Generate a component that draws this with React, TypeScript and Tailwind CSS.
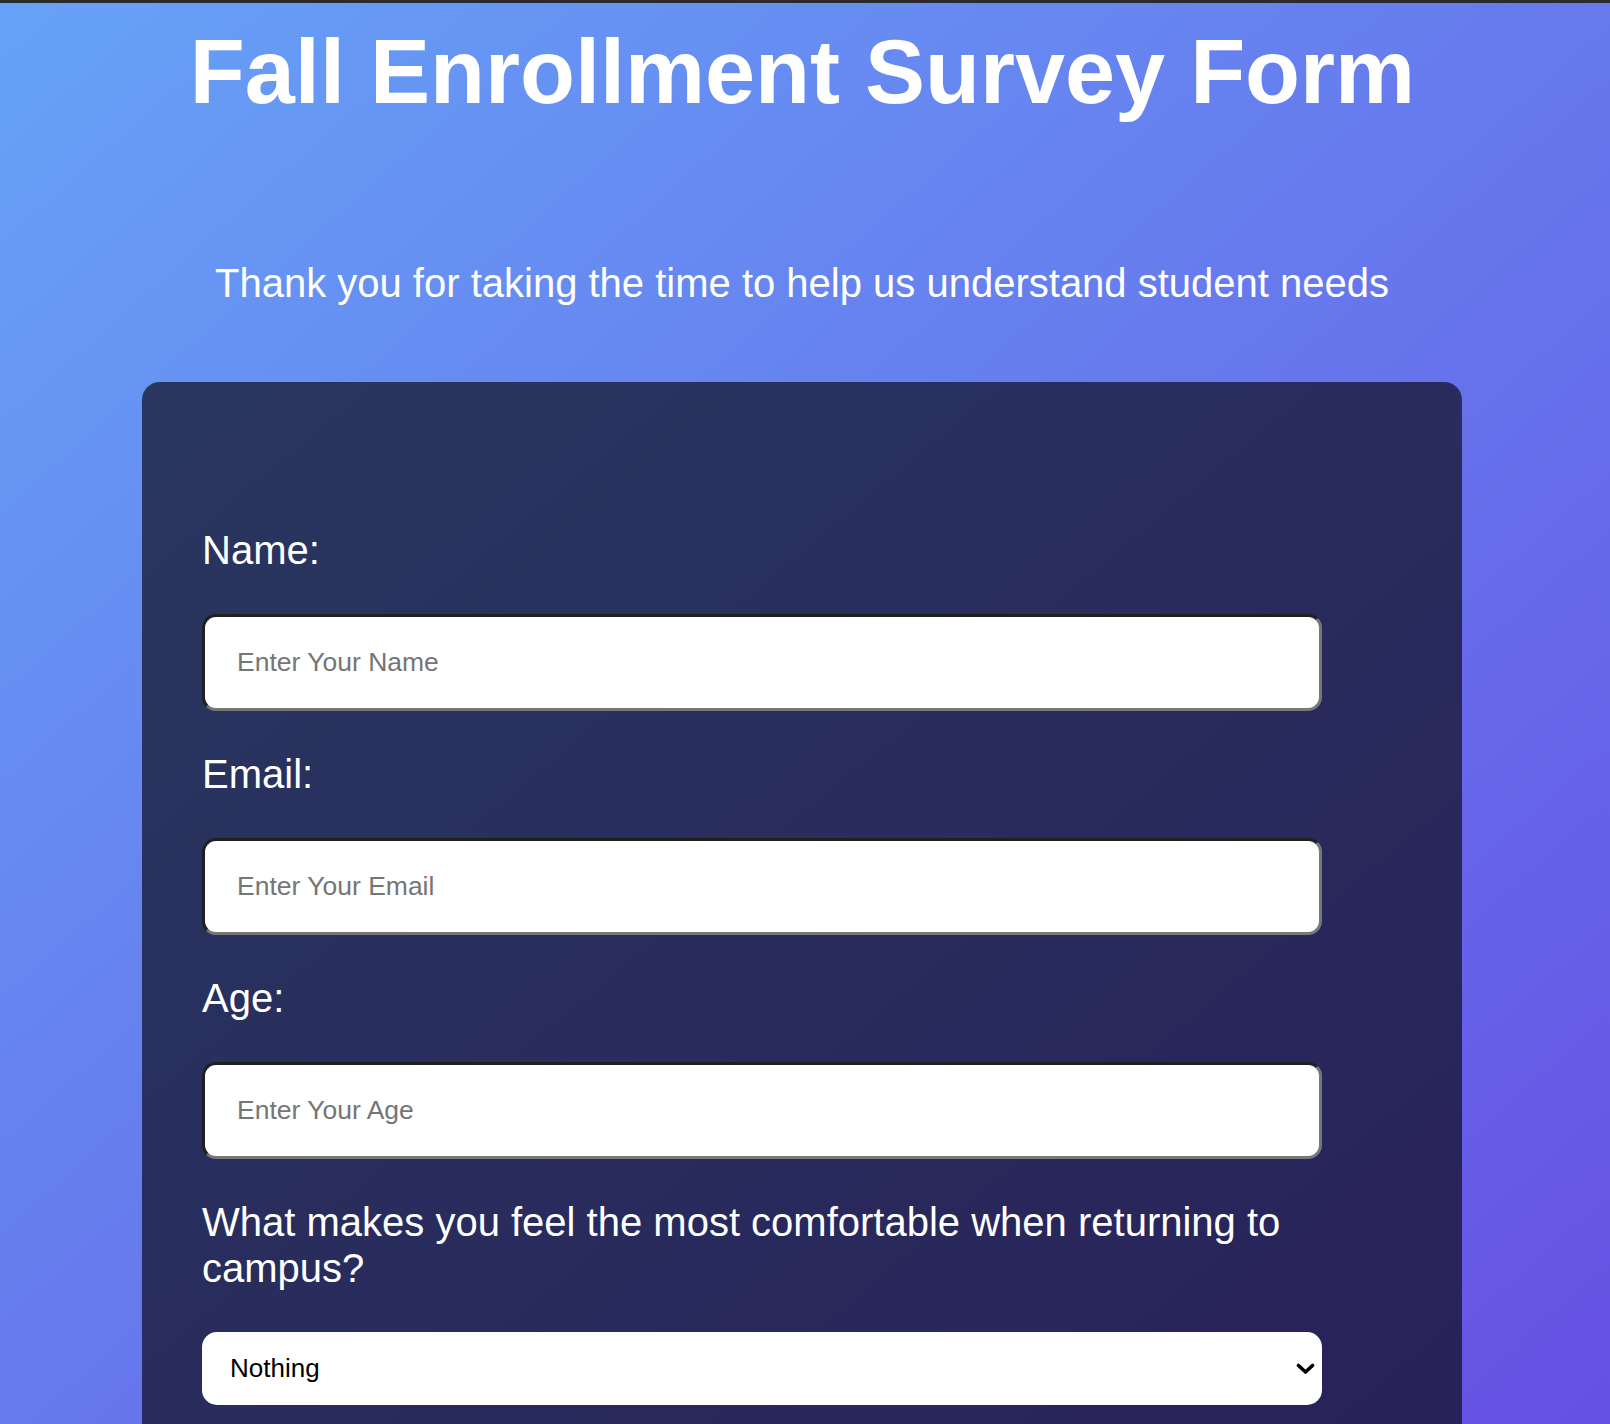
import React from "react";

export default function App() {
  return (
    <div className="h-[1424px] w-full overflow-hidden bg-[linear-gradient(to_bottom_right,#66a3f7,#6650e4)] font-['Liberation_Sans',Arial,Helvetica,sans-serif]">
      <div className="h-[3px] bg-[#2b2b2b]" />
      <h1 className="mt-[17px] pr-[5px] text-center text-[90px] font-bold leading-[104px] text-white">
        Fall Enrollment Survey Form
      </h1>
      <p className="mt-[136px] pr-[6px] text-center text-[40px] leading-[46px] text-white">
        Thank you for taking the time to help us understand student needs
      </p>
      <form
        className="mt-[76px] ml-[142px] w-[1320px] rounded-[18px] bg-[linear-gradient(to_bottom_right,#29375f,#28215a)] pb-[80px] pl-[60px] pt-[145px]"
        onSubmit={(e) => e.preventDefault()}
      >
        <label htmlFor="name" className="block text-[40px] leading-[46px] text-white">
          Name:
        </label>
        <input
          id="name"
          type="text"
          placeholder="Enter Your Name"
          className="mt-[41px] block h-[97px] w-[1120px] rounded-[14px] border-[3px] border-t-[#202020] border-l-[#202020] border-r-[#777777] border-b-[#777777] bg-white pl-[32px] text-[26.5px] text-black outline-none placeholder:text-[#757575]"
        />
        <label htmlFor="email" className="mt-[40px] block text-[40px] leading-[46px] text-white">
          Email:
        </label>
        <input
          id="email"
          type="email"
          placeholder="Enter Your Email"
          className="mt-[41px] block h-[97px] w-[1120px] rounded-[14px] border-[3px] border-t-[#202020] border-l-[#202020] border-r-[#777777] border-b-[#777777] bg-white pl-[32px] text-[26.5px] text-black outline-none placeholder:text-[#757575]"
        />
        <label htmlFor="age" className="mt-[40px] block text-[40px] leading-[46px] text-white">
          Age:
        </label>
        <input
          id="age"
          type="number"
          placeholder="Enter Your Age"
          className="mt-[41px] block h-[97px] w-[1120px] appearance-none rounded-[14px] border-[3px] border-t-[#202020] border-l-[#202020] border-r-[#777777] border-b-[#777777] bg-white pl-[32px] text-[26.5px] text-black outline-none placeholder:text-[#757575] [&::-webkit-inner-spin-button]:appearance-none [&::-webkit-outer-spin-button]:appearance-none"
        />
        <label htmlFor="comfort" className="mt-[40px] block w-[1120px] text-[40px] leading-[46px] text-white">
          What makes you feel the most comfortable when returning to campus?
        </label>
        <div className="relative mt-[41px] w-[1120px]">
          <select
            id="comfort"
            defaultValue="nothing"
            className="block h-[73px] w-full appearance-none rounded-[15px] border-0 bg-white pl-[28px] text-[26px] text-black outline-none"
          >
            <option value="nothing">Nothing</option>
            <option value="masks">Masks</option>
            <option value="distancing">Social distancing</option>
            <option value="vaccines">Vaccines</option>
          </select>
          <svg
            className="pointer-events-none absolute right-[7px] top-1/2 -translate-y-1/2"
            width="19"
            height="12"
            viewBox="0 0 19 12"
            fill="none"
          >
            <polyline
              points="2.5,2.5 9.5,9 16.5,2.5"
              stroke="#000"
              strokeWidth="3.6"
              strokeLinecap="round"
              strokeLinejoin="round"
            />
          </svg>
        </div>
      </form>
    </div>
  );
}
